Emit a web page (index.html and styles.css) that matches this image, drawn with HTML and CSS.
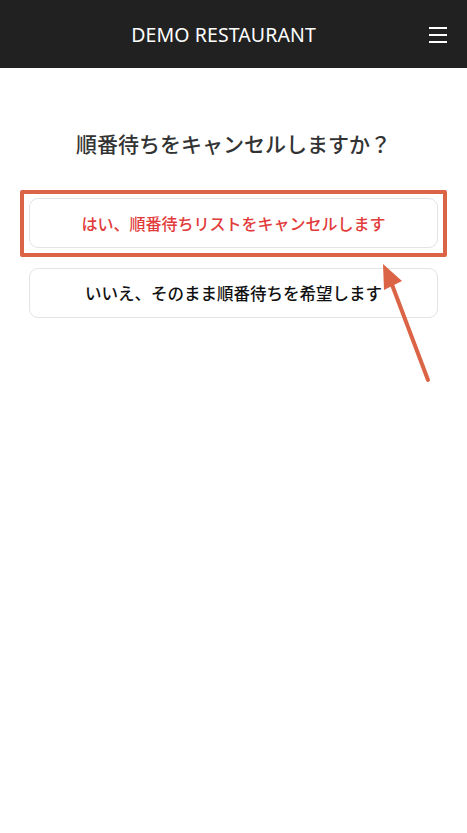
FILE: index.html
```html
<!DOCTYPE html>
<html lang="ja">
<head>
  <meta charset="UTF-8">
  <meta name="viewport" content="width=device-width, initial-scale=1.0">
  <title>DEMO RESTAURANT</title>
  <link rel="stylesheet" href="styles.css">
</head>
<body>
  <header class="topbar">
    <div class="topbar-title">DEMO RESTAURANT</div>
    <button class="menu-btn" aria-label="menu">
      <span></span><span></span><span></span>
    </button>
  </header>

  <main class="container">
    <h2 class="question">順番待ちをキャンセルしますか？</h2>
    <div class="actions">
      <button class="action action-yes highlight">はい、順番待ちリストをキャンセルします</button>
      <button class="action action-no">いいえ、そのまま順番待ちを希望します</button>
    </div>
  </main>

  <!-- annotation arrow -->
  <svg class="arrow" width="467" height="833" viewBox="0 0 467 833">
    <line x1="428" y1="380" x2="391" y2="282" stroke="#dc6446" stroke-width="4" stroke-linecap="round"/>
    <polygon points="383,264 402,281 384,290" fill="#dc6446"/>
  </svg>
</body>
</html>
```

FILE: styles.css
```css
/* page */
body {
  margin: 0;
  font-family: "Noto Sans CJK JP", "Noto Sans", sans-serif;
  background: #fff;
  color: #333;
}

.topbar {
  height: 68px;
  padding-right: 20px;
  background-color: #212121;
  display: flex;
  align-items: center;
  justify-content: center;
  position: relative;
}

.topbar-title {
  color: #fff;
  font-family: "Noto Sans", sans-serif;
  font-size: 19.5px;
  letter-spacing: 0.1px;
}

.menu-btn {
  position: absolute;
  right: 20px;
  top: 27px;
  width: 18px;
  padding: 0;
  border: none;
  background: none;
  display: flex;
  flex-direction: column;
  gap: 5px;
}

.menu-btn span {
  display: block;
  height: 2px;
  background: #fff;
}

.container {
  padding: 46px 29px 0;
}

.question {
  margin: 0;
  text-align: center;
  font-size: 21px;
  font-weight: 500;
  color: #333;
  line-height: 58px;
}

.actions {
  margin-top: 26px;
  display: flex;
  flex-direction: column;
  gap: 20px;
}

.action {
  height: 50px;
  border: 1px solid #e3e3e3;
  border-radius: 9px;
  background: #fff;
  font-family: "Noto Sans CJK JP", sans-serif;
  font-size: 16px;
  font-weight: 500;
  cursor: pointer;
}

.action-yes {
  color: #e23b3b;
}

.action-no {
  color: #111;
  font-size: 16.5px;
}

.highlight {
  position: relative;
}

.highlight::after {
  content: "";
  position: absolute;
  top: -9px;
  left: -10px;
  right: -10px;
  bottom: -10px;
  border: 4px solid #dc6446;
  border-radius: 2px;
  pointer-events: none;
}

.arrow {
  position: absolute;
  top: 0;
  left: 0;
  pointer-events: none;
}
```
